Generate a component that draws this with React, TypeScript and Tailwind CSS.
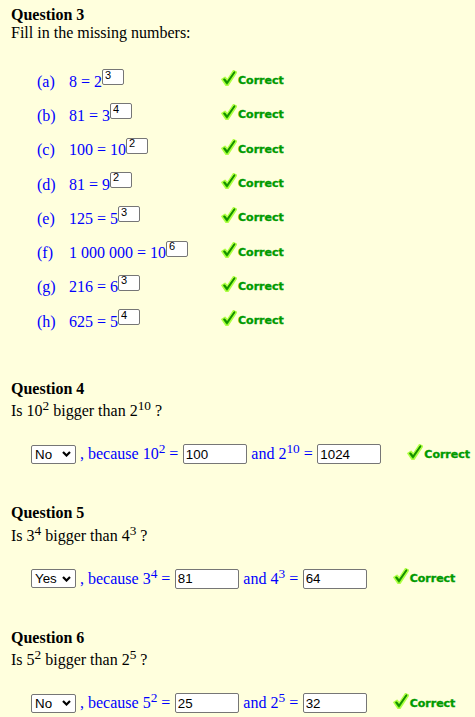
import React from "react";

const rows = [
  { l: "a", e: "8 = 2", v: "3" },
  { l: "b", e: "81 = 3", v: "4" },
  { l: "c", e: "100 = 10", v: "2" },
  { l: "d", e: "81 = 9", v: "2" },
  { l: "e", e: "125 = 5", v: "3" },
  { l: "f", e: "1 000 000 = 10", v: "6" },
  { l: "g", e: "216 = 6", v: "3" },
  { l: "h", e: "625 = 5", v: "4" },
];

function Correct() {
  return (
    <span className="inline-flex items-end h-[16px] shrink-0">
      <svg width="16" height="16" viewBox="0 0 16 16" className="shrink-0">
        <path
          d="M0.9 9.4 L4 7.3 L6.3 10.1 L12.5 0.7 L15.5 2.3 L7 15.3 L5 15.3 Z"
          fill="#27b800"
          stroke="#b0ff44"
          strokeWidth="1.6"
          strokeLinejoin="round"
        />
        <path d="M3.2 9.2 L5.9 12.6 L13.6 2" fill="none" stroke="#168c00" strokeWidth="1.5" strokeLinecap="round" />
      </svg>
      <span className="ml-[1px] font-['DejaVu_Sans',sans-serif] font-bold text-[11px] leading-[11px] text-[#009a00] [-webkit-text-stroke:0.35px_#009a00]">
        Correct
      </span>
    </span>
  );
}

function Select({ value }: { value: string }) {
  return (
    <span className="relative inline-flex h-[19px] w-[45px] shrink-0">
      <select
        defaultValue={value}
        className="appearance-none w-full h-full border border-[#767676] rounded-[2px] bg-white pl-[3px] py-0 text-[13.33px] leading-[15px] font-['Liberation_Sans',Arial,sans-serif] text-black outline-none"
      >
        <option value="">Select</option>
        <option value="Yes">Yes</option>
        <option value="No">No</option>
      </select>
      <svg
        className="pointer-events-none absolute right-[5px] top-[6.5px]"
        width="9"
        height="6"
        viewBox="0 0 9 6"
      >
        <path d="M1 1 L4.5 4.5 L8 1" stroke="#000" strokeWidth="2.2" fill="none" />
      </svg>
    </span>
  );
}

function BigInput({ value }: { value: string }) {
  return (
    <input
      readOnly
      defaultValue={value}
      className="w-[64px] h-[20px] shrink-0 border border-[#767676] rounded-[2px] bg-white px-[2px] py-0 text-[13.33px] font-['Liberation_Sans',Arial,sans-serif] text-black outline-none"
    />
  );
}

function Sup({ children }: { children: React.ReactNode }) {
  return <sup className="text-[13.33px] top-[-6px]">{children}</sup>;
}

function Question({
  n,
  a,
  ae,
  b,
  be,
  sel,
  av,
  bv,
  first,
}: {
  n: number;
  a: string;
  ae: string;
  b: string;
  be: string;
  sel: string;
  av: string;
  bv: string;
  first?: boolean;
}) {
  return (
    <div className={first ? "mt-[41px]" : "mt-[39px]"}>
      <div className="font-bold">Question {n}</div>
      <div className="mt-[4.5px]">
        Is {a}
        <Sup>{ae}</Sup> bigger than {b}
        <Sup>{be}</Sup> ?
      </div>
      <div className="mt-[23px] h-[22px] flex items-center pl-[20px]">
        <Select value={sel} />
        <span className="ml-[4px] text-[#0000ff] whitespace-pre">
          , because {a}
          <Sup>{ae}</Sup> =
        </span>
        <span className="ml-[4.5px] inline-flex">
          <BigInput value={av} />
        </span>
        <span className="ml-[4.5px] text-[#0000ff] whitespace-pre">
          and {b}
          <Sup>{be}</Sup> =
        </span>
        <span className="ml-[4.5px] inline-flex">
          <BigInput value={bv} />
        </span>
        <span className="ml-[26px] mb-[5px] inline-flex">
          <Correct />
        </span>
      </div>
    </div>
  );
}

export default function App() {
  return (
    <div className="h-screen overflow-hidden bg-[#ffffdd] pl-[11px] pt-[6px] font-['Liberation_Serif','Times_New_Roman',serif] text-[16px] leading-[18px] text-black">
      <div className="font-bold">Question 3</div>
      <div>Fill in the missing numbers:</div>
      <div className="mt-[22.5px] pl-[26px]">
        {rows.map((r) => (
          <div key={r.l} className="flex items-center h-[34.3px]">
            <span className="w-[32px] h-[18px] shrink-0 text-[#0000ff]">({r.l})</span>
            <span className="w-[152px] h-[18px] shrink-0 flex items-end text-[#0000ff]">
              <span className="whitespace-pre">{r.e}</span>
              <input
                readOnly
                defaultValue={r.v}
                className="mb-[5.6px] w-[22px] h-[16px] shrink-0 border border-[#767676] rounded-[2px] bg-white px-[2px] pt-0 pb-[5px] text-[11px] leading-[9px] font-['Liberation_Sans',Arial,sans-serif] text-black outline-none"
              />
            </span>
            <span className="mb-[7px] inline-flex">
              <Correct />
            </span>
          </div>
        ))}
      </div>
      <Question first n={4} a="10" ae="2" b="2" be="10" sel="No" av="100" bv="1024" />
      <Question n={5} a="3" ae="4" b="4" be="3" sel="Yes" av="81" bv="64" />
      <Question n={6} a="5" ae="2" b="2" be="5" sel="No" av="25" bv="32" />
    </div>
  );
}
